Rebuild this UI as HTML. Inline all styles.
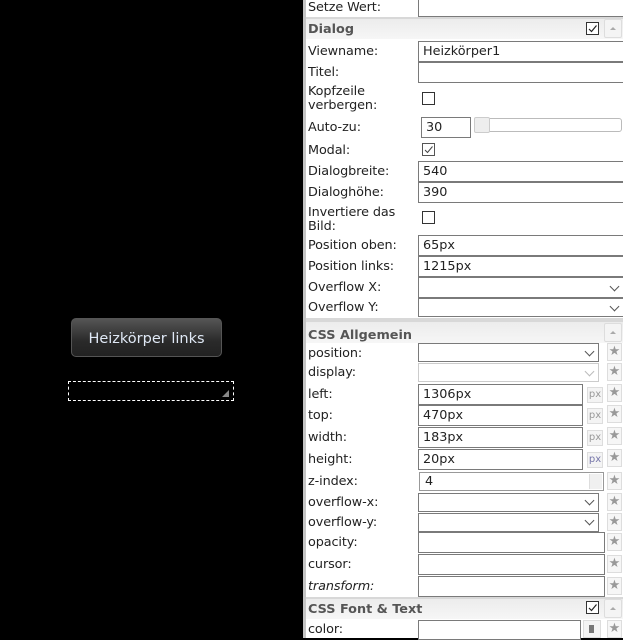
<!DOCTYPE html>
<html><head><meta charset="utf-8"><style>
*{box-sizing:border-box;margin:0;padding:0}
body{width:623px;height:638px;background:#000;position:relative;overflow:hidden;font-family:"DejaVu Sans","Liberation Sans",sans-serif;font-size:12.5px;color:#222}
#panel{position:absolute;left:303px;top:0;width:320px;height:638px;background:#fff;border-left:3px solid #c4c4c4}
.a{position:absolute}
.l{position:absolute;left:308px;line-height:14px;white-space:nowrap;letter-spacing:-0.1px;font-size:12.8px}
.i{position:absolute;background:#fff;border:1px solid #7a7a7a;line-height:20px;padding-left:4px;font-size:12.8px}
.h{position:absolute;left:306px;width:317px;background:linear-gradient(#ececec,#f6f6f6);font-weight:bold;color:#555;padding-left:2px;border-top:2px solid #d8d8d8;font-size:12.8px}
.cb{position:absolute;width:13px;height:13px;border:1px solid #333;background:#fff}
.up{position:absolute;width:18px;height:19px;border:1px solid #ddd;background:#f4f4f4;border-radius:2px}
.up:after{content:"";position:absolute;left:5px;top:7px;border-left:3px solid transparent;border-right:3px solid transparent;border-bottom:3px solid #aaa}
.st{position:absolute;left:607px;width:15px;height:18px;border:1px solid #ddd;background:#f6f6f6;color:#999;font-size:13px;text-align:center;line-height:16px}
.px{position:absolute;left:587px;width:16px;height:16px;border:1px solid #ddd;background:#f4f4f4;color:#999;font-size:10px;text-align:center;line-height:14px}
.ch{position:absolute;width:7px;height:7px;border-right:1px solid #555;border-bottom:1px solid #555;transform:rotate(45deg)}
</style></head><body>
<div class="a" style="left:71px;top:318px;width:151px;height:39px;border:1px solid #555;border-radius:5px;background:linear-gradient(#555,#2a2a2a 60%,#222);color:#dfe8f5;font-size:14.5px;text-align:center;line-height:40px;font-family:'DejaVu Sans',sans-serif">Heizkörper links</div>
<div class="a" style="left:68px;top:381px;width:166px;height:20px;border:1px dashed #fff"></div>
<div class="a" style="left:222px;top:390px;width:0;height:0;border-left:7px solid transparent;border-bottom:7px solid #888"></div>
<div id="panel"></div>

<div class="l" style="top:1px">Setze Wert:</div><div class="i" style="left:418px;top:-2px;width:210px;height:19px"></div>
<div class="h" style="top:17px;height:22px;line-height:21px">Dialog</div>
<div class="cb" style="left:586px;top:22px"><svg width="11" height="11" style="position:absolute;left:0;top:0"><path d="M2 6 L4.5 8.5 L9.5 2.5" stroke="#222" fill="none" stroke-width="1.2"/></svg></div>
<div class="up" style="left:604px;top:19px"></div>

<div class="l" style="top:45px">Viewname:</div><div class="i" style="left:418px;top:41px;width:210px;height:21px">Heizkörper1</div>
<div class="l" style="top:66px">Titel:</div><div class="i" style="left:418px;top:62px;width:210px;height:21px"></div>
<div class="l" style="top:85px">Kopfzeile<br>verbergen:</div><div class="cb" style="left:422px;top:92px"></div>
<div class="l" style="top:121px">Auto-zu:</div><div class="i" style="left:421px;top:117px;width:50px;height:21px">30</div>
<div class="a" style="left:474px;top:118px;width:148px;height:14px;border:1px solid #bbb;border-radius:3px;background:#fff"></div>
<div class="a" style="left:474px;top:117px;width:16px;height:16px;border:1px solid #ccc;border-radius:2px;background:#eee"></div>
<div class="l" style="top:144px">Modal:</div><div class="cb" style="left:422px;top:143px;border-color:#555"><svg width="11" height="11" style="position:absolute;left:0;top:0"><path d="M2 6 L4.5 8.5 L9.5 2.5" stroke="#444" fill="none" stroke-width="1"/></svg></div>
<div class="l" style="top:165px">Dialogbreite:</div><div class="i" style="left:418px;top:161px;width:210px;height:21px">540</div>
<div class="l" style="top:186px">Dialoghöhe:</div><div class="i" style="left:418px;top:182px;width:210px;height:21px">390</div>
<div class="l" style="top:206px">Invertiere das<br>Bild:</div><div class="cb" style="left:422px;top:211px"></div>
<div class="l" style="top:239px">Position oben:</div><div class="i" style="left:418px;top:235px;width:210px;height:21px">65px</div>
<div class="l" style="top:260px">Position links:</div><div class="i" style="left:418px;top:256px;width:210px;height:21px">1215px</div>
<div class="l" style="top:281px">Overflow X:</div><div class="i" style="left:418px;top:277px;width:210px;height:21px"></div><div class="ch" style="left:611px;top:283px"></div>
<div class="l" style="top:301px">Overflow Y:</div><div class="i" style="left:418px;top:298px;width:210px;height:19px"></div><div class="ch" style="left:611px;top:303px"></div>

<div class="h" style="top:318px;height:25px;line-height:27px;border-top-width:4px">CSS Allgemein</div>
<div class="up" style="left:604px;top:323px"></div>

<div class="l" style="top:347px">position:</div><div class="i" style="left:418px;top:343px;width:181px;height:19px"></div><div class="ch" style="left:586px;top:348px"></div><div class="st" style="top:343px">★</div>
<div class="l" style="top:366px">display:</div><div class="i" style="left:418px;top:363px;width:181px;height:19px;border-color:#ccc"></div><div class="ch" style="left:586px;top:368px;border-color:#bbb"></div><div class="st" style="top:363px">★</div>
<div class="l" style="top:388px">left:</div><div class="i" style="left:418px;top:384px;width:165px;height:21px">1306px</div><div class="px" style="top:387px">px</div><div class="st" style="top:384px">★</div>
<div class="l" style="top:409px">top:</div><div class="i" style="left:418px;top:405px;width:165px;height:21px">470px</div><div class="px" style="top:408px">px</div><div class="st" style="top:405px">★</div>
<div class="l" style="top:431px">width:</div><div class="i" style="left:418px;top:427px;width:165px;height:21px">183px</div><div class="px" style="top:430px">px</div><div class="st" style="top:427px">★</div>
<div class="l" style="top:453px">height:</div><div class="i" style="left:418px;top:449px;width:165px;height:21px">20px</div><div class="px" style="top:452px;color:#77a">px</div><div class="st" style="top:449px">★</div>
<div class="l" style="top:475px">z-index:</div><div class="i" style="left:419px;top:472px;width:185px;height:19px;border-color:#999;padding-left:5px;line-height:18px">4</div><div class="a" style="left:589px;top:474px;width:13px;height:15px;background:#f0f0f0;border-left:1px solid #ddd"></div><div class="st" style="top:472px">★</div>
<div class="l" style="top:496px">overflow-x:</div><div class="i" style="left:418px;top:493px;width:181px;height:19px"></div><div class="ch" style="left:586px;top:497px"></div><div class="st" style="top:493px">★</div>
<div class="l" style="top:516px">overflow-y:</div><div class="i" style="left:418px;top:513px;width:181px;height:19px"></div><div class="ch" style="left:586px;top:517px"></div><div class="st" style="top:513px">★</div>
<div class="l" style="top:536px">opacity:</div><div class="i" style="left:418px;top:532px;width:187px;height:21px"></div><div class="st" style="top:533px">★</div>
<div class="l" style="top:558px">cursor:</div><div class="i" style="left:418px;top:554px;width:187px;height:21px"></div><div class="st" style="top:555px">★</div>
<div class="l" style="top:580px;font-style:italic">transform:</div><div class="i" style="left:418px;top:576px;width:187px;height:21px"></div><div class="st" style="top:577px">★</div>

<div class="h" style="top:597px;height:22px;line-height:22px">CSS Font &amp; Text</div>
<div class="cb" style="left:586px;top:601px"><svg width="11" height="11" style="position:absolute;left:0;top:0"><path d="M2 6 L4.5 8.5 L9.5 2.5" stroke="#222" fill="none" stroke-width="1.2"/></svg></div>
<div class="up" style="left:604px;top:599px"></div>
<div class="l" style="top:623px">color:</div><div class="i" style="left:418px;top:620px;width:163px;height:20px"></div><div class="a" style="left:583px;top:620px;width:18px;height:18px;border:1px solid #ddd;background:#f4f4f4"></div><div class="a" style="left:589px;top:625px;width:5px;height:8px;background:#777"></div><div class="st" style="top:620px">★</div>
</body></html>
